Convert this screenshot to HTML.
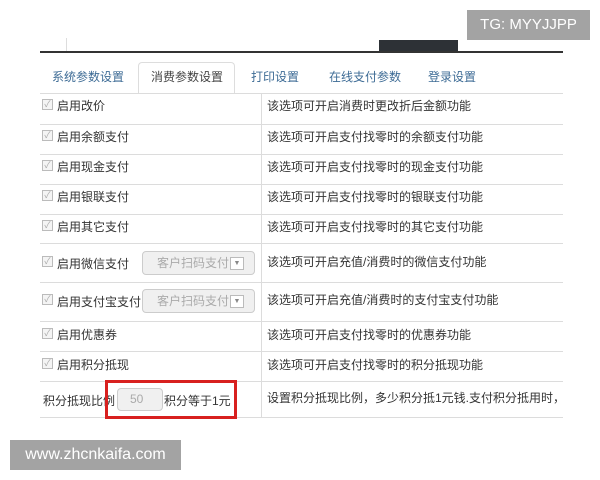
<!DOCTYPE html>
<html><head><meta charset="utf-8"><style>
*{margin:0;padding:0;box-sizing:border-box}
body{width:600px;height:480px;background:#fff;position:relative;overflow:hidden;font-family:"Liberation Sans","Noto Sans CJK SC",sans-serif;font-size:12px;color:#333}
.abs{position:absolute}
.tg{left:467px;top:10px;width:123px;height:30px;background:#a3a3a3;color:#fff;font-size:15px;line-height:30px;text-align:center}
.wm{left:10px;top:440px;width:171px;height:30px;background:#a3a3a3;color:#fff;font-size:16px;line-height:30px;text-align:center}
.tab{top:62px;height:31px;line-height:31px;color:#3d6b95;font-size:12px}
.hl{left:40px;width:523px;height:1px;background:#dcdcdc}
.cb{position:absolute;left:42px;width:11px;height:11px;border:1px solid #bbb;background:#f4f4f4;color:#aaa;font-size:9px;line-height:9px;text-align:center}
.lbl{position:absolute;left:57px}
.desc{position:absolute;left:267px}
.sel{position:absolute;left:142px;width:113px;height:24px;border:1px solid #ccc;border-radius:4px;background:#f0f0f0;color:#aaa;line-height:22px;padding-left:14px}
.sel i{position:absolute;right:10px;top:5px;width:14px;height:13px;border:1px solid #bbb;background:#fff;font-style:normal;font-size:7px;line-height:11px;text-align:center;color:#888}
</style></head><body>
<div class="abs tg">TG: MYYJJPP</div>
<div class="abs" style="left:66px;top:38px;width:1px;height:13px;background:#ddd"></div>
<div class="abs" style="left:379px;top:40px;width:79px;height:11px;background:#2d3136"></div>
<div class="abs" style="left:40px;top:51px;width:523px;height:2px;background:#333"></div>
<div class="abs" style="left:138px;top:62px;width:97px;height:32px;border:1px solid #ddd;border-bottom:none;border-radius:4px 4px 0 0;background:#fff"></div>
<div class="abs tab" style="left:52px">系统参数设置</div>
<div class="abs tab" style="left:151px;color:#444">消费参数设置</div>
<div class="abs tab" style="left:251px">打印设置</div>
<div class="abs tab" style="left:329px">在线支付参数</div>
<div class="abs tab" style="left:428px">登录设置</div>
<div class="abs hl" style="top:93px"></div>
<div class="abs hl" style="top:124px"></div>
<div class="abs hl" style="top:154px"></div>
<div class="abs hl" style="top:184px"></div>
<div class="abs hl" style="top:214px"></div>
<div class="abs hl" style="top:243px"></div>
<div class="abs hl" style="top:282px"></div>
<div class="abs hl" style="top:321px"></div>
<div class="abs hl" style="top:351px"></div>
<div class="abs hl" style="top:381px"></div>
<div class="abs hl" style="top:417px"></div>
<div class="abs" style="left:261px;top:93px;width:1px;height:325px;background:#dcdcdc"></div>

<div class="cb" style="top:99px">✓</div><div class="lbl" style="top:97px">启用改价</div><div class="desc" style="top:97px">该选项可开启消费时更改折后金额功能</div>
<div class="cb" style="top:130px">✓</div><div class="lbl" style="top:128px">启用余额支付</div><div class="desc" style="top:128px">该选项可开启支付找零时的余额支付功能</div>
<div class="cb" style="top:160px">✓</div><div class="lbl" style="top:158px">启用现金支付</div><div class="desc" style="top:158px">该选项可开启支付找零时的现金支付功能</div>
<div class="cb" style="top:190px">✓</div><div class="lbl" style="top:188px">启用银联支付</div><div class="desc" style="top:188px">该选项可开启支付找零时的银联支付功能</div>
<div class="cb" style="top:220px">✓</div><div class="lbl" style="top:218px">启用其它支付</div><div class="desc" style="top:218px">该选项可开启支付找零时的其它支付功能</div>
<div class="cb" style="top:256px">✓</div><div class="lbl" style="top:255px">启用微信支付</div><div class="sel" style="top:251px">客户扫码支付<i>▼</i></div><div class="desc" style="top:253px">该选项可开启充值/消费时的微信支付功能</div>
<div class="cb" style="top:294px">✓</div><div class="lbl" style="top:293px">启用支付宝支付</div><div class="sel" style="top:289px">客户扫码支付<i>▼</i></div><div class="desc" style="top:291px">该选项可开启充值/消费时的支付宝支付功能</div>
<div class="cb" style="top:328px">✓</div><div class="lbl" style="top:326px">启用优惠券</div><div class="desc" style="top:326px">该选项可开启支付找零时的优惠券功能</div>
<div class="cb" style="top:358px">✓</div><div class="lbl" style="top:356px">启用积分抵现</div><div class="desc" style="top:356px">该选项可开启支付找零时的积分抵现功能</div>
<div class="abs" style="left:43px;top:392px">积分抵现比例</div>
<div class="abs" style="left:117px;top:388px;width:46px;height:23px;border:1px solid #ccc;border-radius:4px;background:#f0f0f0;color:#aaa;line-height:21px;padding-left:12px">50</div>
<div class="abs" style="left:164px;top:392px">积分等于1元</div>
<div class="abs" style="left:105px;top:380px;width:132px;height:39px;border:3px solid #d8201f"></div>
<div class="desc" style="top:389px;white-space:nowrap;width:296px;overflow:hidden">设置积分抵现比例，多少积分抵1元钱.支付积分抵用时，只能</div>
<div class="abs wm">www.zhcnkaifa.com</div>
</body></html>
